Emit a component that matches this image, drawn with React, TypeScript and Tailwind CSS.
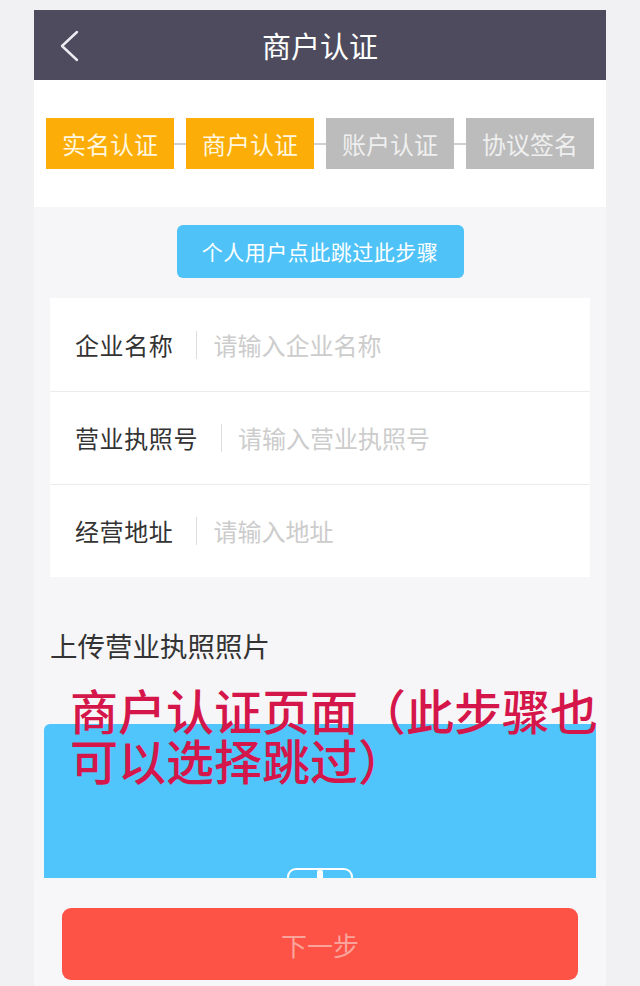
const steps = [
  { label: "实名认证", done: true },
  { label: "商户认证", done: true },
  { label: "账户认证", done: false },
  { label: "协议签名", done: false },
];

const fields = [
  { label: "企业名称", placeholder: "请输入企业名称" },
  { label: "营业执照号", placeholder: "请输入营业执照号" },
  { label: "经营地址", placeholder: "请输入地址" },
];

export default function App() {
  return (
    <div className="relative w-[640px] h-[986px] overflow-hidden bg-[#f1f1f3] px-[34px] pt-[10px] font-['Noto_Sans_CJK_SC',sans-serif]">
      <div className="flex flex-col h-full bg-[#f6f6f8]">
        {/* header */}
        <div className="relative h-[70px] shrink-0 bg-[#4d4b5d] flex items-center justify-center">
          <svg
            className="absolute left-[24px] top-[20px]"
            width="24"
            height="32"
            viewBox="0 0 24 32"
            fill="none"
          >
            <path
              d="M19 2 L4 16 L19 30"
              stroke="#ececf2"
              strokeWidth="2.4"
              strokeLinecap="round"
              strokeLinejoin="round"
            />
          </svg>
          <span className="text-[29px] leading-none text-white">商户认证</span>
        </div>

        {/* steps */}
        <div className="h-[127px] shrink-0 bg-white pt-[38px] px-[12px]">
          <div className="flex items-center">
            {steps.map((s, i) => (
              <div key={s.label} className="flex items-center">
                {i > 0 && <div className="w-[12px] h-[2px] bg-[#cfcfcf]" />}
                <div
                  className={`w-[128px] h-[51px] flex items-center justify-center text-[24px] ${
                    s.done ? "bg-[#fcad07] text-[#fff6df]" : "bg-[#bcbcbc] text-[#efefef]"
                  }`}
                >
                  {s.label}
                </div>
              </div>
            ))}
          </div>
        </div>

        {/* skip button */}
        <div className="flex justify-center mt-[18px]">
          <button className="w-[287px] h-[53px] rounded-[6px] bg-[#4fc3f7] text-white text-[21px] tracking-[0.5px] flex items-center justify-center">
            个人用户点此跳过此步骤
          </button>
        </div>

        {/* form */}
        <div className="mx-[16px] mt-[20px] bg-white flex flex-col">
          {fields.map((f, i) => (
            <div
              key={f.label}
              className={`h-[93px] flex items-center pl-[25px] ${i > 0 ? "border-t border-[#ececee]" : ""}`}
            >
              <span className="text-[24px] tracking-[0.6px] text-[#333333]">{f.label}</span>
              <div className="w-px h-[28px] bg-[#dddddd] ml-[23px] mr-[16px]" />
              <span className="text-[24px] text-[#cccccc]">{f.placeholder}</span>
            </div>
          ))}
        </div>

        {/* upload */}
        <div className="mt-[50px] pl-[16px] text-[27.5px] leading-[36px] text-[#333333]">
          上传营业执照照片
        </div>
        <div className="mx-[10px] mt-[61px] h-[154px] shrink-0 rounded-tl-[6px] rounded-tr-[2px] bg-[#4fc5fb] flex items-end justify-center overflow-hidden">
          <div className="relative w-[66px] h-[10px] rounded-t-[9px] border-2 border-b-0 border-white">
            <div className="absolute left-1/2 -translate-x-1/2 bottom-0 w-[6px] h-[8px] rounded-t-[2px] bg-white" />
          </div>
        </div>

        {/* bottom bar */}
        <div className="flex-1 bg-[#f7f7f9] px-[28px] pt-[30px]">
          <button className="w-full h-[72px] rounded-[9px] bg-[#fd5246] text-[26px] text-[#f9a39b] flex items-center justify-center">
            下一步
          </button>
        </div>
      </div>

      {/* annotation overlay */}
      <div className="absolute left-[70px] top-[684px] w-[550px] text-[48px] leading-[50px] font-medium text-[#d5164a]">
        商户认证页面（此步骤也
        <br />
        可以选择跳过）
      </div>
    </div>
  );
}
